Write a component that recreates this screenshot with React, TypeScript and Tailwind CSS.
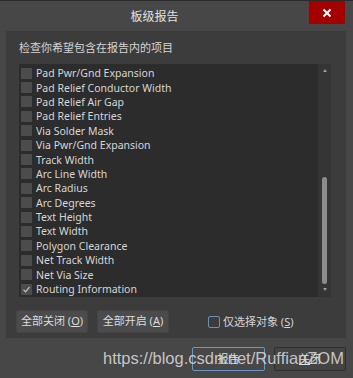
import React from "react"

const items = [
  "Pad Pwr/Gnd Expansion",
  "Pad Relief Conductor Width",
  "Pad Relief Air Gap",
  "Pad Relief Entries",
  "Via Solder Mask",
  "Via Pwr/Gnd Expansion",
  "Track Width",
  "Arc Line Width",
  "Arc Radius",
  "Arc Degrees",
  "Text Height",
  "Text Width",
  "Polygon Clearance",
  "Net Track Width",
  "Net Via Size",
  "Routing Information",
]

const cjk = "font-['Noto_Sans','Noto_Sans_CJK_SC',sans-serif]"

export default function App() {
  return (
    <div
      className={`relative w-[353px] h-[378px] overflow-hidden bg-[#474747] border-t border-[#2a2a2a] text-[#d8d8d8] ${cjk}`}
    >
      {/* 标题栏 */}
      <div className="flex h-[30px] items-start">
        <div className="flex-1 pt-[7px] text-center text-[12px] leading-[18px] text-[#e2e2e2]">
          板级报告
        </div>
        <button className="mr-[8px] flex h-[23px] w-[36px] items-center justify-center bg-[#a50000]">
          <svg width="10" height="10" viewBox="0 0 10 10">
            <path d="M1.5 1.5 L8.5 8.5 M8.5 1.5 L1.5 8.5" stroke="#ffffff" strokeWidth="2" />
          </svg>
        </button>
      </div>

      {/* 主面板 */}
      <div className="ml-[6px] h-[307px] w-[340px] bg-[#3c3c3c]">
        <div className="h-[33px] pl-[13px] pt-[8px] text-[11px] leading-[18px] text-[#d4d4d4]">
          检查你希望包含在报告内的项目
        </div>

        {/* 列表 */}
        <div className="ml-[13px] flex h-[233px] w-[312px] bg-[#2c2c2c]">
          <div className="flex-1 pt-[2px]">
            {items.map((item, i) => (
              <div key={item} className="flex h-[14.4px] items-center">
                <div className="ml-[2px] flex h-[11px] w-[11px] items-center justify-center rounded-[1px] bg-[#4c4c4c]">
                  {i === items.length - 1 && (
                    <svg width="9" height="9" viewBox="0 0 9 9">
                      <path d="M1.5 4.8 L3.6 6.8 L7.5 2" stroke="#bdbdbd" strokeWidth="1.2" fill="none" />
                    </svg>
                  )}
                </div>
                <span className="ml-[4px] whitespace-nowrap text-[10.5px] leading-[14px] text-[#d6d6d6]">
                  {item}
                </span>
              </div>
            ))}
          </div>
          {/* 滚动条 */}
          <div className="relative w-[13px] bg-[#353535]">
            <div className="absolute left-[5px] top-[5px] h-0 w-0 border-x-[2.5px] border-b-[3px] border-x-transparent border-b-[#9a9a9a]" />
            <div className="absolute left-[4px] top-[113px] h-[107px] w-[5px] rounded-[3px] bg-[#8c8c8c]" />
            <div className="absolute left-[5px] top-[224px] h-0 w-0 border-x-[2.5px] border-t-[3px] border-x-transparent border-t-[#9a9a9a]" />
          </div>
        </div>

        {/* 按钮行 */}
        <div className="mt-[13px] flex items-center pl-[10px]">
          <button className="h-[23px] w-[72px] rounded-[2px] border border-[#444444] bg-[#4b4b4b] text-[11px] text-[#dcdcdc]">
            全部关闭 (<span className="underline">O</span>)
          </button>
          <button className="ml-[9px] h-[23px] w-[72px] rounded-[2px] border border-[#444444] bg-[#4b4b4b] text-[11px] text-[#dcdcdc]">
            全部开启 (<span className="underline">A</span>)
          </button>
          <div className="ml-[39px] flex items-center">
            <div className="h-[12px] w-[12px] rounded-[2px] border border-[#6f8fb3] bg-[#3c3c3c]" />
            <span className="ml-[3px] text-[11px] leading-[14px] text-[#d4d4d4]">
              仅选择对象 (<span className="underline">S</span>)
            </span>
          </div>
        </div>
      </div>

      {/* 底部按钮 */}
      <div className="mt-[9px] flex justify-end gap-[9px] pr-[7px]">
        <button className="h-[24px] w-[73px] rounded-[2px] border border-[#6b97c4] bg-[#474747] text-[11px] text-[#dcdcdc]">
          报告
        </button>
        <button className="h-[24px] w-[72px] rounded-[2px] border border-[#2e2e2e] bg-[#444444] text-[11px] text-[#dcdcdc]">
          <span className="underline">关</span>闭
        </button>
      </div>

      {/* 水印 */}
      <div className="pointer-events-none absolute left-[103px] top-[346px] whitespace-nowrap font-['Liberation_Sans',Arial,sans-serif] text-[16.5px] leading-[22px] text-[#d6d6d6]/90">
        https://blog.csdn.net/RuffianZOM
      </div>
    </div>
  )
}
